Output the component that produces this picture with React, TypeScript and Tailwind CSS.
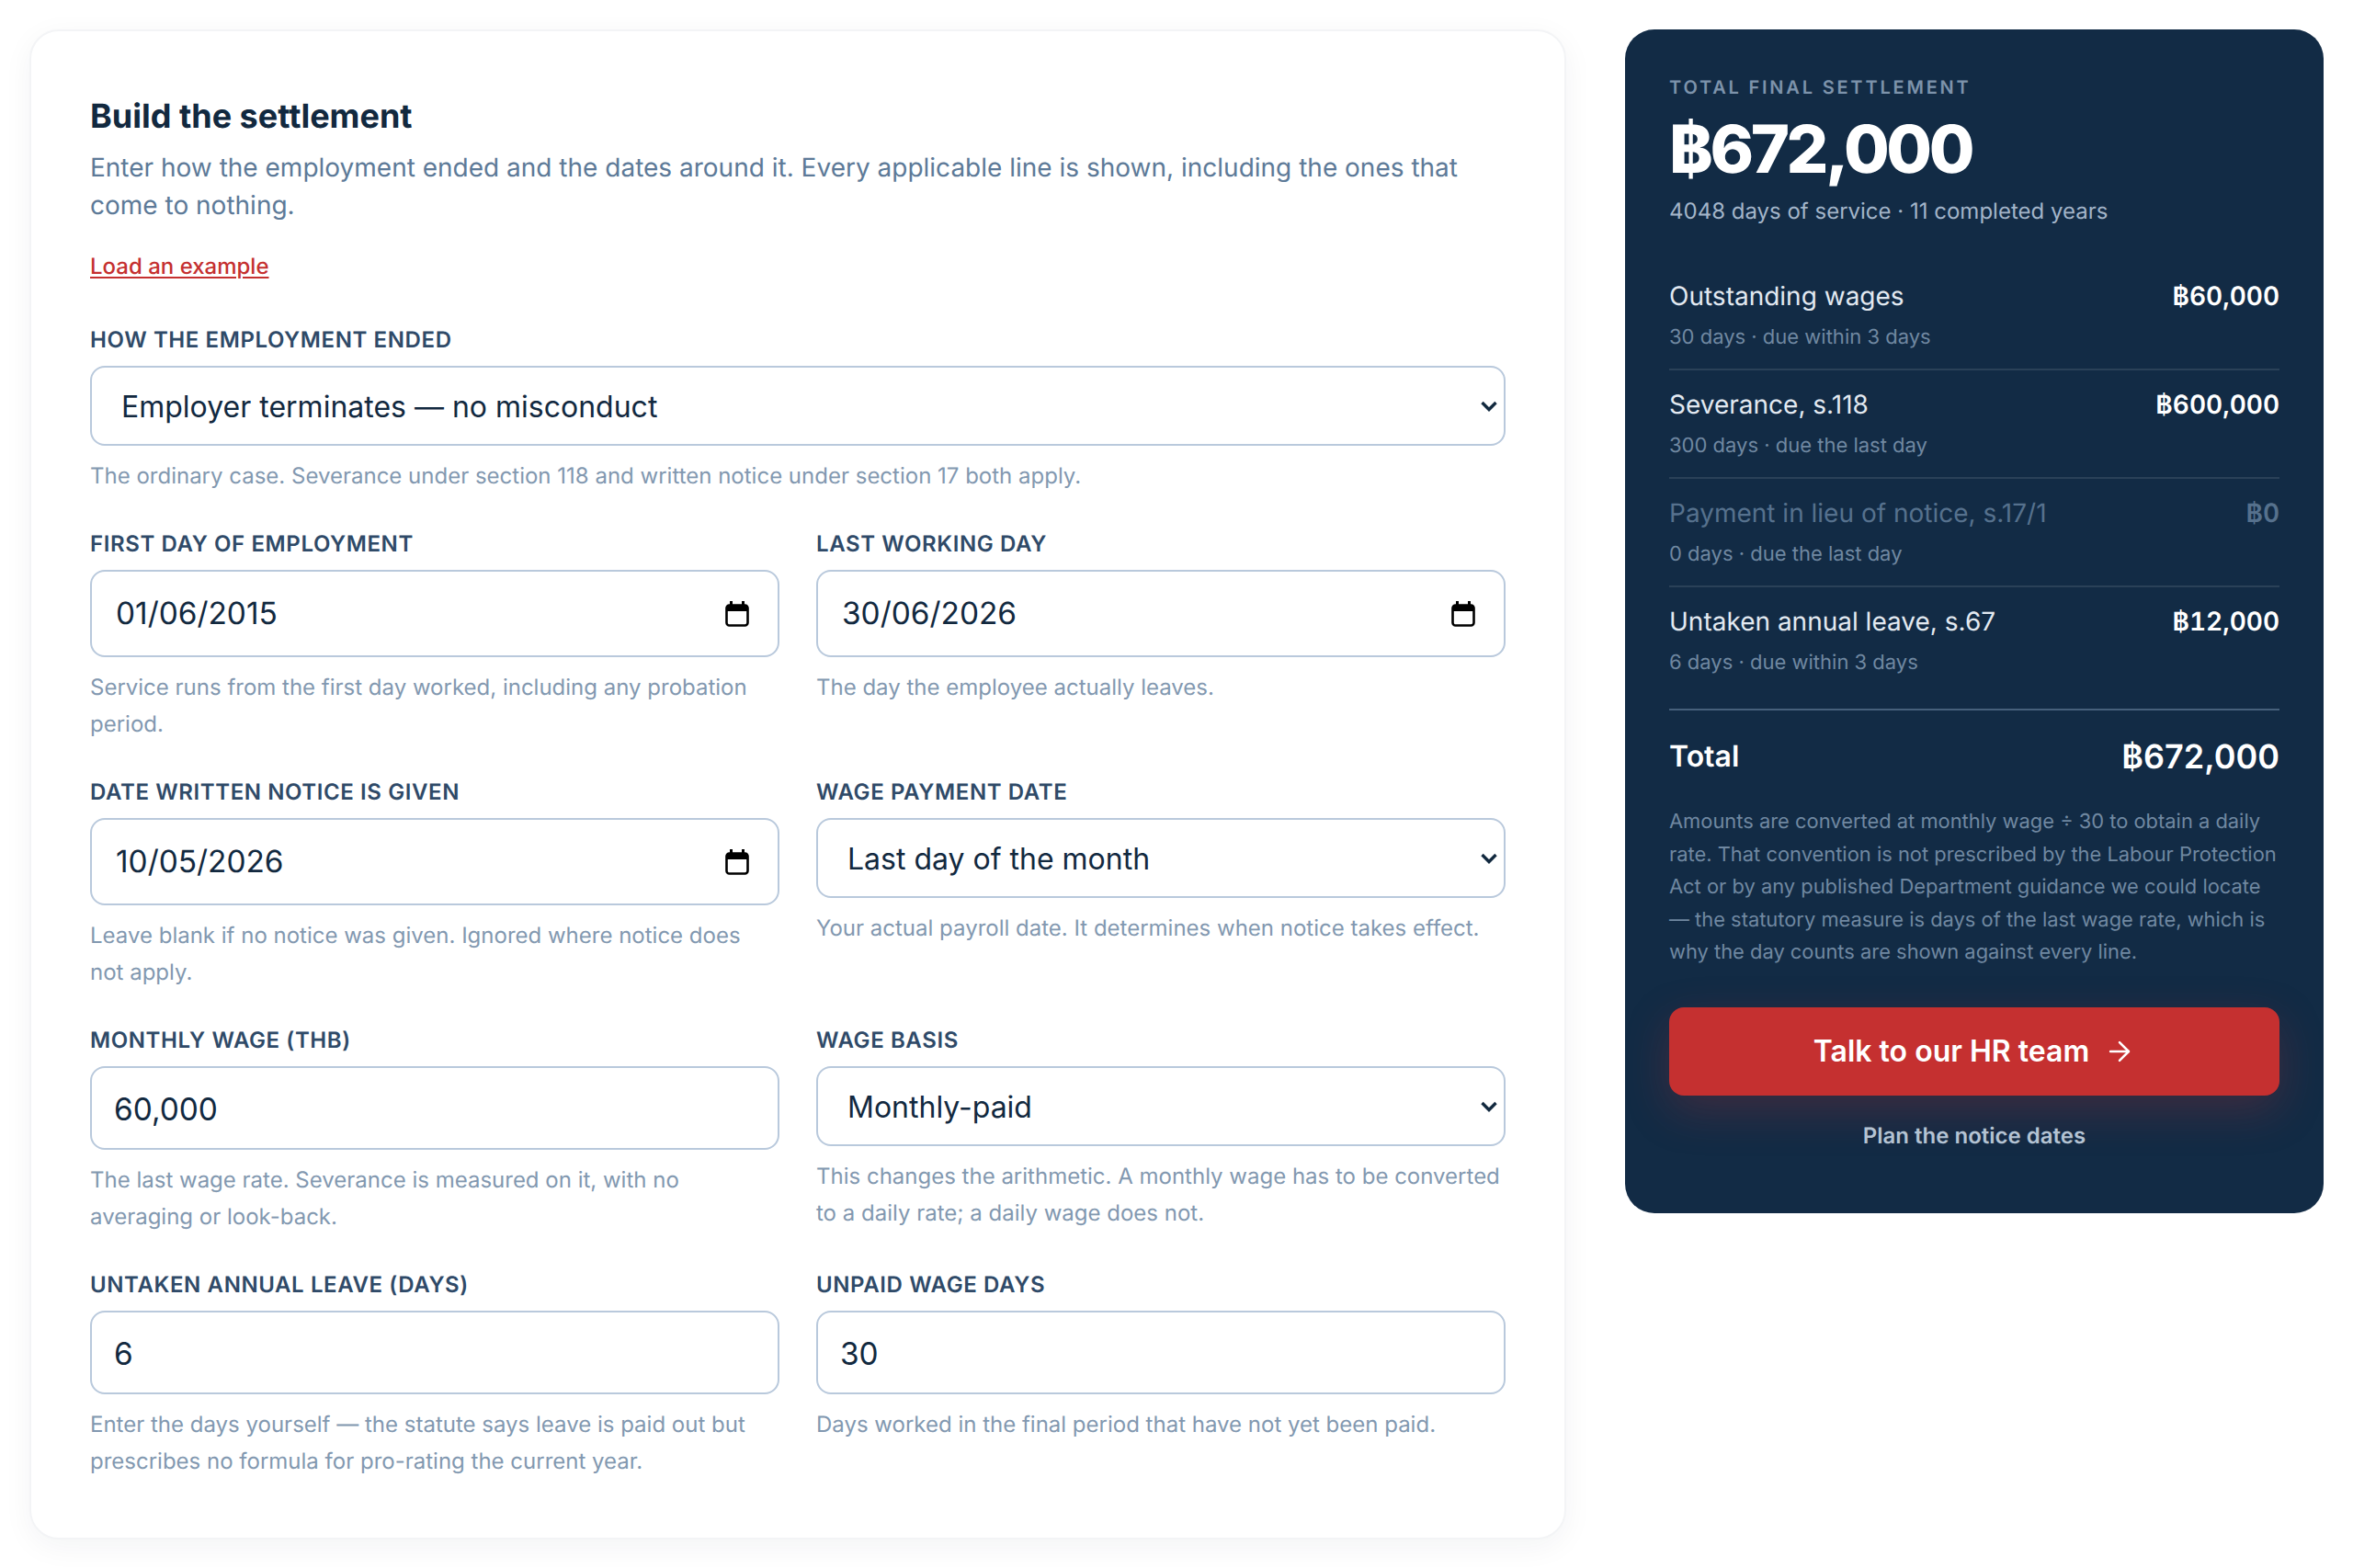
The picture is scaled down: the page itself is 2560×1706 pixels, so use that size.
import React from "react";
import { ArrowRight } from "lucide-react";

const inter = { fontFamily: "Inter, sans-serif" };

const Label: React.FC<{ children: React.ReactNode }> = ({ children }) => (
  <label className="block pt-[1px] mb-[10px] text-[24px] leading-[36px] tracking-[0.6px] font-semibold uppercase text-[#2f4a68]">
    {children}
  </label>
);

const Hint: React.FC<{ children: React.ReactNode }> = ({ children }) => (
  <p className="mt-[13px] text-[24px] leading-[40px] text-[#8298b0]">{children}</p>
);

const Calendar = () => (
  <svg width="26" height="28" viewBox="0 0 26 28" className="shrink-0">
    <path d="M5 0h3v5H5zM18 0h3v5h-3z" fill="#000" />
    <rect x="1.5" y="4.5" width="23" height="22" rx="3" fill="none" stroke="#000" strokeWidth="2.6" />
    <path d="M1 8a4 4 0 0 1 4-4h16a4 4 0 0 1 4 4v3H1z" fill="#000" />
  </svg>
);

const DateField: React.FC<{ value: string }> = ({ value }) => (
  <div className="flex items-center justify-between h-[95px] pl-[26px] pr-[31px] bg-white border-2 border-[#b9c9dc] rounded-[16px] text-[33.4px] text-[#12293f]">
    <span className="pt-[2px]">{value}</span>
    <Calendar />
  </div>
);

const TextField: React.FC<{ value: string }> = ({ value }) => (
  <input
    readOnly
    value={value}
    className="block w-full h-[91px] px-[24px] pt-[3px] bg-white border-2 border-[#b9c9dc] rounded-[16px] text-[33.4px] text-[#12293f] outline-none"
  />
);

const SelectField: React.FC<{ value: string }> = ({ value }) => (
  <div className="relative">
    <select
      value={value}
      onChange={() => undefined}
      className="block w-full h-[87px] pl-[32px] pr-[40px] pt-[2px] appearance-none bg-white border-2 border-[#b9c9dc] rounded-[16px] text-[32px] text-[#12293f] outline-none"
    >
      <option>{value}</option>
    </select>
    <svg width="18" height="12" viewBox="0 0 18 12" className="absolute right-[9px] top-1/2 -translate-y-1/2">
      <path d="M1.5 2L9 9.5L16.5 2" fill="none" stroke="#12293f" strokeWidth="3.4" />
    </svg>
  </div>
);

const lines = [
  { name: "Outstanding wages", amount: "฿60,000", sub: "30 days · due within 3 days" },
  { name: "Severance, s.118", amount: "฿600,000", sub: "300 days · due the last day" },
  { name: "Payment in lieu of notice, s.17/1", amount: "฿0", sub: "0 days · due the last day", muted: true },
  { name: "Untaken annual leave, s.67", amount: "฿12,000", sub: "6 days · due within 3 days" },
];

export default function App() {
  return (
    <div style={inter} className="min-h-[1706px] bg-white p-[32px] grid grid-cols-[1fr_760px] gap-[64px] items-start [text-rendering:geometricPrecision]">
      <main className="bg-white border-2 border-[#f3f4f6] rounded-[32px] px-[64px] pt-[64px] pb-[63px] shadow-[0_8px_32px_rgba(18,41,63,0.05)]">
        <h2 className="text-[36px] leading-[56px] font-bold text-[#12293f]">Build the settlement</h2>
        <p className="mt-[8px] text-[28px] leading-[41px] text-[#5d7a98]">
          Enter how the employment ended and the dates around it. Every applicable line is shown, including the ones
          that come to nothing.
        </p>
        <a className="inline-block mt-[28px] text-[24px] leading-[36px] font-medium text-[#c53030] underline decoration-2 underline-offset-[3px]">
          Load an example
        </a>

        <div className="mt-[43px]">
          <Label>How the employment ended</Label>
          <SelectField value="Employer terminates — no misconduct" />
          <Hint>The ordinary case. Severance under section 118 and written notice under section 17 both apply.</Hint>
        </div>

        <div className="mt-[35px] grid grid-cols-2 gap-x-[40px] gap-y-[35px]">
          <div>
            <Label>First day of employment</Label>
            <DateField value="01/06/2015" />
            <Hint>Service runs from the first day worked, including any probation period.</Hint>
          </div>
          <div>
            <Label>Last working day</Label>
            <DateField value="30/06/2026" />
            <Hint>The day the employee actually leaves.</Hint>
          </div>
          <div>
            <Label>Date written notice is given</Label>
            <DateField value="10/05/2026" />
            <Hint>Leave blank if no notice was given. Ignored where notice does not apply.</Hint>
          </div>
          <div>
            <Label>Wage payment date</Label>
            <SelectField value="Last day of the month" />
            <Hint>Your actual payroll date. It determines when notice takes effect.</Hint>
          </div>
          <div>
            <Label>Monthly wage (THB)</Label>
            <TextField value="60,000" />
            <Hint>The last wage rate. Severance is measured on it, with no averaging or look-back.</Hint>
          </div>
          <div>
            <Label>Wage basis</Label>
            <SelectField value="Monthly-paid" />
            <Hint>This changes the arithmetic. A monthly wage has to be converted to a daily rate; a daily wage does not.</Hint>
          </div>
          <div>
            <Label>Untaken annual leave (days)</Label>
            <TextField value="6" />
            <Hint>Enter the days yourself — the statute says leave is paid out but prescribes no formula for pro-rating the current year.</Hint>
          </div>
          <div>
            <Label>Unpaid wage days</Label>
            <TextField value="30" />
            <Hint>Days worked in the final period that have not yet been paid.</Hint>
          </div>
        </div>
      </main>

      <aside className="bg-[#122b45] rounded-[32px] p-[48px] text-white">
        <div className="text-[20px] leading-[30px] font-semibold uppercase tracking-[2.8px] text-[#7d93ab]">
          Total final settlement
        </div>
        <div className="mt-[13px] text-[72px] leading-[80px] font-[850] tracking-[-3.4px]">฿672,000</div>
        <div className="mt-[9px] text-[24px] leading-[36px] text-[#a3b5c9]">4048 days of service · 11 completed years</div>

        <div className="mt-[54px]">
          {lines.map((l) => (
            <div key={l.name} className="border-b-2 border-[#2a4158] last:border-b-0 pb-[18px] mb-[17px] last:mb-0">
              <div className="flex justify-between text-[28px] leading-[40px]">
                <span className={l.muted ? "text-[#56718d]" : "text-[#e2e9f1]"}>{l.name}</span>
                <span className={l.muted ? "font-semibold tabular-nums text-[#56718d]" : "font-semibold tabular-nums text-white"}>{l.amount}</span>
              </div>
              <div className="mt-[9px] text-[22px] leading-[32px] text-[#7088a1]">{l.sub}</div>
            </div>
          ))}
        </div>

        <div className="mt-[16px] border-t-2 border-[#46607b] pt-[27px] flex justify-between items-center">
          <span className="text-[32px] leading-[46px] font-semibold">Total</span>
          <span className="text-[36px] leading-[46px] font-semibold">฿672,000</span>
        </div>

        <p className="mt-[31px] text-[21.9px] leading-[35.5px] text-[#7088a1]">
          Amounts are converted at monthly wage ÷ 30 to obtain a daily rate. That convention is not prescribed by the
          Labour Protection Act or by any published Department guidance we could locate — the statutory measure is days
          of the last wage rate, which is why the day counts are shown against every line.
        </p>

        <button className="mt-[41px] w-full h-[96px] rounded-[16px] bg-[#c53030] flex items-center justify-center gap-[16px] text-[32px] font-semibold shadow-[0_16px_48px_rgba(197,48,48,0.25)]">
          Talk to our HR team
          <ArrowRight size={34} strokeWidth={1.8} />
        </button>
        <div className="mt-[26px] mb-[18px] text-center text-[24px] leading-[36px] font-semibold text-[#b4c3d3]">
          Plan the notice dates
        </div>
      </aside>
    </div>
  );
}
